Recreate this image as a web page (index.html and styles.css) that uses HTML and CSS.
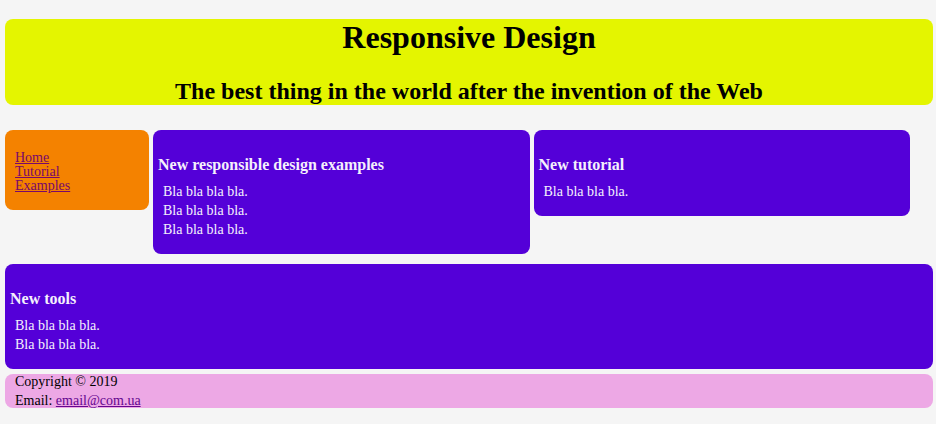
FILE: index.html
```html
<!DOCTYPE html>
<html lang="en">
<head>
  <meta charset="utf-8">
  <meta name="viewport" content="width=device-width, initial-scale=1">
  <title>Responsive Design</title>
  <link rel="stylesheet" href="styles.css">
</head>
<body>
  <header class="header">
    <h1>Responsive Design</h1>
    <h2>The best thing in the world after the invention of the Web</h2>
  </header>
  <main class="main">
    <div class="columns">
      <nav class="menu">
        <a href="#home">Home</a>
        <a href="#tutorial">Tutorial</a>
        <a href="#examples">Examples</a>
      </nav>
      <article class="card">
        <h3>New responsible design examples</h3>
        <p>Bla bla bla bla.</p>
        <p>Bla bla bla bla.</p>
        <p>Bla bla bla bla.</p>
      </article>
      <article class="card">
        <h3>New tutorial</h3>
        <p>Bla bla bla bla.</p>
      </article>
    </div>
    <article class="card">
      <h3>New tools</h3>
      <p>Bla bla bla bla.</p>
      <p>Bla bla bla bla.</p>
    </article>
  </main>
  <footer class="footer">
    <p>Copyright © 2019</p>
    <p>Email: <a href="mailto:email@com.ua">email@com.ua</a></p>
  </footer>
</body>
</html>
```

FILE: styles.css
```css
* {
  box-sizing: border-box;
}

body {
  margin: 19px 3px 16px 5px;
  background: #f5f5f5;
  color: #000;
  font-family: "Liberation Serif", "Times New Roman", serif;
  font-size: 14px;
  line-height: 14px;
}

h1,
h2,
h3,
p {
  margin: 0;
}

a {
  color: #65078f;
}

.header,
.menu,
.card,
.footer {
  border-radius: 8px;
}

.header {
  background: #e4f500;
  text-align: center;
}

.header h1 {
  margin-bottom: 21px;
  font-size: 32px;
  line-height: 37px;
}

.header h2 {
  font-size: 24px;
  line-height: 28px;
}

.main {
  display: grid;
  gap: 10px;
  margin: 25px 0 5px;
}

.columns {
  display: grid;
  grid-template-columns: 144px 1fr 1fr;
  align-items: start;
  gap: 4px;
  margin-right: 23px;
}

.menu {
  display: flex;
  flex-direction: column;
  align-items: flex-start;
  padding: 21px 10px 17px;
  background: #f48200;
}

.menu a {
  color: #78086b;
}

.card {
  display: flex;
  flex-direction: column;
  gap: 5px;
  padding: 26px 5px 17px;
  background: #5400d8;
  color: #f5f0fc;
}

.card h3 {
  margin-bottom: 6px;
  font-size: 16px;
  line-height: 18px;
}

.card p {
  padding: 0 5px;
}

.footer {
  display: flex;
  flex-direction: column;
  gap: 5px;
  padding: 1px 10px 0;
  background: #eda8e5;
}

@media (max-width: 600px) {
  .columns {
    grid-template-columns: 1fr;
    margin-right: 0;
  }
}
```
